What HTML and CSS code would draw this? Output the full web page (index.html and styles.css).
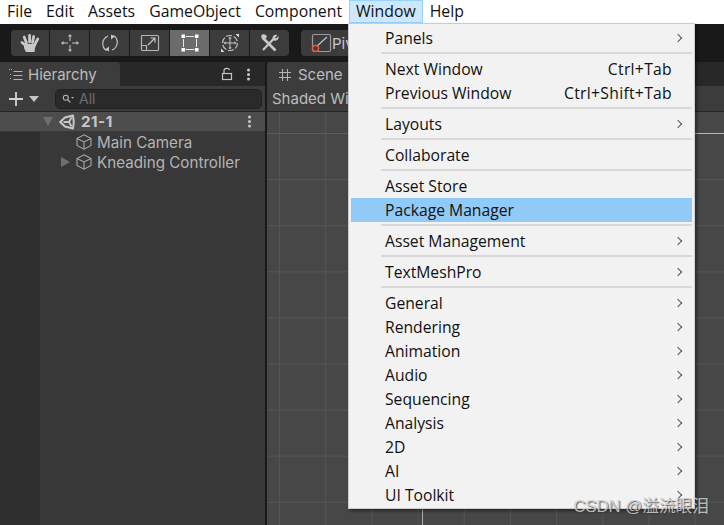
FILE: index.html
```html
<!DOCTYPE html>
<html lang="en">
<head>
    <meta charset="UTF-8">
    <title>Unity Editor - Window menu</title>
    <link rel="stylesheet" href="styles.css">
</head>
<body>
    <nav class="menubar">
        <span class="menubar-item">File</span>
        <span class="menubar-item">Edit</span>
        <span class="menubar-item">Assets</span>
        <span class="menubar-item">GameObject</span>
        <span class="menubar-item">Component</span>
        <span class="menubar-item active">Window</span>
        <span class="menubar-item">Help</span>
    </nav>

    <div class="toolbar">
        <div class="tool-group">
            <button class="tool">
                <svg width="20" height="20" viewBox="0 0 20 20"><g fill="none" stroke="#c8c8c8" stroke-width="2.800" stroke-linecap="round"><path d="M6.500 10 4.200 4M9.600 9V2.300M12.500 9.500l1.200-6M15 11l2.800-5M5.500 12.500 2 9.500"/></g><path d="M4 11h12.500l-1.500 4-.5 4H6L4 15Z" fill="#c8c8c8"/></svg>
            </button>
            <button class="tool">
                <svg width="20" height="20" viewBox="0 0 20 20" fill="none" stroke="#c4c4c4" stroke-width="1"><path d="M10 3v5M10 12v5M3 10h5M12 10h5"/><path d="M8 3.500h4L10 1ZM8 16.500h4L10 19ZM3.500 8v4L1 10ZM16.500 8v4L19 10Z" fill="#c4c4c4" stroke="none"/></svg>
            </button>
            <button class="tool">
                <svg width="20" height="20" viewBox="0 0 20 20" fill="none" stroke="#c4c4c4" stroke-width="1.200"><path d="M6.500 17.500C1 14 1.500 6 8 3"/><path d="M13.500 2.500C19 6 18.500 14 12 17"/><path d="M9 18.500v-5l-4 3ZM11 1.500v5l4-3Z" fill="#c4c4c4" stroke="none"/></svg>
            </button>
            <button class="tool">
                <svg width="20" height="20" viewBox="0 0 20 20" fill="none" stroke="#b4b4b4" stroke-width="1.200"><rect x="1.500" y="2.500" width="17" height="15" rx="1"/><path d="M1.500 12.500h5v5"/><path d="M8 12l7-7M10.500 5H15v4.500" stroke="#c8c8c8"/></svg>
            </button>
            <button class="tool selected">
                <svg width="20" height="20" viewBox="0 0 20 20" fill="#fff"><path d="M3.500 6v8M16.500 6v8M6 3.500h8M6 16.500h8" stroke="#e6e6e6" stroke-width="1"/><rect x="1.500" y="1.500" width="3.600" height="3.600" rx=".5"/><rect x="14.900" y="1.500" width="3.600" height="3.600" rx=".5"/><rect x="1.500" y="14.900" width="3.600" height="3.600" rx=".5"/><rect x="14.900" y="14.900" width="3.600" height="3.600" rx=".5"/></svg>
            </button>
            <button class="tool">
                <svg width="20" height="20" viewBox="0 0 20 20" fill="none" stroke="#c4c4c4"><circle cx="10" cy="10" r="7.500" stroke-width="1.200" stroke-dasharray="6 1.800"/><path d="M10 5v10M5 10h10"/><path d="M8.300 5.500h3.400L10 3.500ZM8.300 14.500h3.400L10 16.500ZM5.500 8.300v3.400L3.500 10ZM14.500 8.300v3.400l2-1.700Z" fill="#c4c4c4" stroke="none"/><path d="M19 1v3.500L15.500 1ZM1 19v-3.500L4.500 19Z" fill="#e0e0e0" stroke="none"/></svg>
            </button>
            <button class="tool">
                <svg width="20" height="20" viewBox="0 0 20 20" fill="none"><path d="M3 5 15.500 17.500" stroke="#c8c8c8" stroke-width="2.600"/><path d="M2 6 1 3l2-2 3 1 1 2-3 3Z" fill="#c8c8c8"/><path d="M3 17 14 5.500" stroke="#c8c8c8" stroke-width="2.200"/><path d="M12.500 6c-.5-3 2-5 5-4l-2.500 2.500 1 1L18.500 3c.8 3-1.500 5.500-4.500 4.500Z" fill="#c8c8c8"/></svg>
            </button>
        </div>
        <button class="pivot">
            <svg width="23" height="26" viewBox="0 0 23 26" fill="none"><rect x="3.500" y="4.500" width="18" height="17" rx="1.500" stroke="#9a9a9a" stroke-width="1.200"/><path d="M7 17 18 7" stroke="#c4c4c4" stroke-width="1.200"/><circle cx="6.500" cy="18.500" r="3" stroke="#e8583a" stroke-width="1.500" fill="#3c3c3c"/></svg>
            <span>Piv</span>
        </button>
    </div>

    <main class="workspace">
        <section class="hierarchy">
            <div class="tabstrip">
                <div class="tab tab-hierarchy">
                    <svg width="14" height="12" viewBox="0 0 14 12" fill="none" stroke="#b4b4b4"><path d="M4.500 2.500h9M4.500 6.500h9M4.500 10.500h9"/><path d="M0 .5h3M1 5.500h2M1 9.500h2" stroke-dasharray="1 1"/></svg>
                    <span>Hierarchy</span>
                </div>
                <div class="tab-actions">
                    <svg width="12" height="14" viewBox="0 0 12 14" fill="none" stroke="#c4c4c4" stroke-width="1.200"><rect x="1.500" y="6.500" width="9" height="6"/><path d="M3 6.500V3.500C3 .8 8 .8 8.500 3"/></svg>
                    <span class="kebab"></span>
                </div>
            </div>
            <div class="hierarchy-tools">
                <svg class="plus" width="16" height="16" viewBox="0 0 16 16"><path d="M8 1v14M1 8h14" stroke="#d2d2d2" stroke-width="1.800"/></svg>
                <span class="caret-down"></span>
                <div class="search">
                    <svg width="12" height="10" viewBox="0 0 12 10" fill="none" stroke="#b4b4b4" stroke-width="1.100"><circle cx="3.800" cy="3.800" r="2.500"/><path d="m5.800 5.800 2.600 2.700"/><path d="M9 3h3l-1.500 1.800Z" fill="#b4b4b4" stroke="none"/></svg>
                    <span>All</span>
                </div>
            </div>
            <div class="tree">
                <div class="scene-row">
                    <span class="caret-open"></span>
                    <svg class="unity-logo" width="16" height="16" viewBox="0 0 16 16" fill="none" stroke="#c8c8c8"><path d="M1.200 8 6 3.500 14 1.500 14.800 8 14 14.500 6 12.500Z" stroke-width="2" stroke-linejoin="round"/><path d="M4.500 8H10L12.500 3.500M10 8l2.500 4.500" stroke-width="1.800"/></svg>
                    <strong>21-1</strong>
                    <span class="kebab"></span>
                </div>
                <div class="tree-row">
                    <span class="caret-slot"></span>
                    <svg width="16" height="16" viewBox="0 0 16 16" fill="none" stroke="#a8a8a8" stroke-width="1.100"><path d="M8 .8 15 4.500v7L8 15.200 1 11.500v-7Z"/><path d="M1 4.500 8 8l7-3.500M8 8v7.200"/></svg>
                    <span>Main Camera</span>
                </div>
                <div class="tree-row">
                    <span class="caret-slot"><span class="caret-closed"></span></span>
                    <svg width="16" height="16" viewBox="0 0 16 16" fill="none" stroke="#a8a8a8" stroke-width="1.100"><path d="M8 .8 15 4.500v7L8 15.200 1 11.500v-7Z"/><path d="M1 4.500 8 8l7-3.500M8 8v7.200"/></svg>
                    <span>Kneading Controller</span>
                </div>
            </div>
        </section>

        <section class="scene">
            <div class="tabstrip">
                <div class="tab tab-scene">
                    <svg width="12" height="12" viewBox="0 0 12 12" fill="none" stroke="#b4b4b4"><path d="M3.500 0v12M8.500 0v12M0 3.500h12M0 8.500h12"/></svg>
                    <span>Scene</span>
                </div>
            </div>
            <div class="scene-tools"><span class="shading-mode">Shaded Wi</span></div>
            <div class="scene-grid"></div>
        </section>
    </main>

    <div class="dropdown">
        <div class="item"><span>Panels</span><i class="arrow"></i></div>
        <hr>
        <div class="item"><span>Next Window</span><em>Ctrl+Tab</em></div>
        <div class="item"><span>Previous Window</span><em>Ctrl+Shift+Tab</em></div>
        <hr>
        <div class="item"><span>Layouts</span><i class="arrow"></i></div>
        <hr>
        <div class="item"><span>Collaborate</span></div>
        <hr>
        <div class="item"><span>Asset Store</span></div>
        <div class="item hover"><span>Package Manager</span></div>
        <hr>
        <div class="item"><span>Asset Management</span><i class="arrow"></i></div>
        <hr>
        <div class="item"><span>TextMeshPro</span><i class="arrow"></i></div>
        <hr>
        <div class="item"><span>General</span><i class="arrow"></i></div>
        <div class="item"><span>Rendering</span><i class="arrow"></i></div>
        <div class="item"><span>Animation</span><i class="arrow"></i></div>
        <div class="item"><span>Audio</span><i class="arrow"></i></div>
        <div class="item"><span>Sequencing</span><i class="arrow"></i></div>
        <div class="item"><span>Analysis</span><i class="arrow"></i></div>
        <div class="item"><span>2D</span><i class="arrow"></i></div>
        <div class="item"><span>AI</span><i class="arrow"></i></div>
        <div class="item"><span>UI Toolkit</span><i class="arrow"></i></div>
    </div>

    <div class="watermark">CSDN @溢流眼泪</div>
</body>
</html>
```

FILE: styles.css
```css
* {
    box-sizing: border-box;
}

html, body {
    margin: 0;
    height: 100%;
    overflow: hidden;
}

body {
    position: relative;
    width: 724px;
    height: 525px;
    background-color: #191919;
    font-family: "Open Sans", "Noto Sans", sans-serif;
    display: flex;
    flex-direction: column;
}

svg {
    display: block;
    flex: none;
}

/* top menu */
.menubar {
    display: flex;
    height: 24px;
    background-color: #fff;
    font-size: 15.800px;
    line-height: 23px;
    color: #111;
}

.menubar-item {
    padding: 0 7px;
    height: 23px;
}

.menubar-item.active {
    background-color: #cce8ff;
    outline: 1px solid #99d1ff;
    outline-offset: -1px;
}

/* tool buttons */
.toolbar {
    display: flex;
    gap: 12px;
    height: 38px;
    padding: 6px 0 6px 11px;
}

.tool-group {
    display: flex;
    gap: 1px;
}

.tool {
    display: flex;
    align-items: center;
    justify-content: center;
    width: 39px;
    height: 26px;
    padding: 0;
    border: none;
    background-color: #3c3c3c;
}

.tool:first-child {
    width: 38px;
    border-radius: 4px 0 0 4px;
}

.tool:last-child {
    border-radius: 0 4px 4px 0;
}

.tool.selected {
    background-color: #6b6b6b;
}

.pivot {
    display: flex;
    align-items: center;
    width: 90px;
    height: 26px;
    padding: 0 0 0 8px;
    border: none;
    border-radius: 4px 0 0 4px;
    background-color: #3c3c3c;
    color: #c8c8c8;
    font: 15px "Inter", sans-serif;
}

/* panels */
.workspace {
    display: flex;
    flex: 1;
    min-height: 0;
    gap: 2px;
}

.tabstrip {
    display: flex;
    height: 24px;
    background-color: #282828;
}

.tab {
    display: flex;
    align-items: center;
    padding-top: 1px;
    background-color: #3c3c3c;
    color: #bdbdbd;
    font: 15px/23px "Inter", sans-serif;
}

.hierarchy {
    display: flex;
    flex-direction: column;
    width: 265px;
}

.tab-hierarchy {
    gap: 5px;
    width: 120px;
    padding-left: 9px;
    border-top-right-radius: 4px;
}

.tab-actions {
    display: flex;
    align-items: center;
    gap: 14px;
    margin-left: auto;
    padding-right: 15px;
}

.kebab {
    width: 3px;
    height: 3px;
    border-radius: 50%;
    background-color: #c8c8c8;
    box-shadow: 0 -4.500px 0 #c8c8c8, 0 4.500px 0 #c8c8c8;
}

.hierarchy-tools {
    display: flex;
    align-items: center;
    height: 26px;
    padding-left: 8px;
    background-color: #3c3c3c;
    border-bottom: 1px solid #232323;
}

.caret-down {
    width: 0;
    height: 0;
    margin-left: 5px;
    border-left: 5px solid transparent;
    border-right: 5px solid transparent;
    border-top: 6px solid #c4c4c4;
}

.search {
    display: flex;
    align-items: center;
    gap: 5px;
    width: 207px;
    height: 20px;
    margin-left: 16px;
    padding-left: 6px;
    border: 1px solid #212121;
    border-radius: 5px;
    background-color: #2a2a2a;
    color: #6e6e6e;
    font: 14px "Inter", sans-serif;
}

.tree {
    flex: 1;
    background: linear-gradient(to right, #2f2f2f 40px, #383838 40px);
    color: #b4b4b4;
    font: 15.200px "Inter", sans-serif;
}

.scene-row {
    display: flex;
    align-items: center;
    height: 20px;
    padding-left: 43px;
    background-color: #4d4d4d;
    color: #c8c8c8;
    border-bottom: 1px solid #3a3a3a;
}

.scene-row strong {
    margin-left: 6px;
    font-weight: 700;
    letter-spacing: 0.500px;
}

.scene-row .kebab {
    margin-left: auto;
    margin-right: 14px;
}

.caret-open {
    width: 0;
    height: 0;
    margin-right: 6px;
    border-left: 5px solid transparent;
    border-right: 5px solid transparent;
    border-top: 9px solid #6f6f6f;
}

.tree-row {
    display: flex;
    align-items: center;
    gap: 5px;
    height: 20px;
    padding-left: 61px;
}

.caret-slot {
    display: flex;
    width: 10px;
}

.caret-closed {
    width: 0;
    height: 0;
    border-top: 5px solid transparent;
    border-bottom: 5px solid transparent;
    border-left: 9px solid #6f6f6f;
}

.scene {
    display: flex;
    flex-direction: column;
    flex: 1;
    min-width: 0;
}

.tab-scene {
    gap: 7px;
    width: 90px;
    padding-left: 12px;
    border-top-left-radius: 4px;
}

.scene-tools {
    height: 26px;
    padding-left: 5px;
    background-color: #3c3c3c;
    color: #bdbdbd;
    font: 15px/25px "Inter", sans-serif;
    border-bottom: 1px solid #232323;
    white-space: nowrap;
}

/* the two brighter lines are the scene axes, the rest repeat every 46px */
.scene-grid {
    flex: 1;
    background-color: #474747;
    background-image:
        linear-gradient(#b0b0b0, #b0b0b0),
        linear-gradient(to right, #5c5c5c 420px, #b8b8b8 421px),
        linear-gradient(to right, #555 1px, transparent 1px),
        linear-gradient(to bottom, #555 1px, transparent 1px);
    background-size: 1px 100%, 100% 1px, 46.200px 46.100px, 46.200px 46.100px;
    background-position: 155px 0, 0 21px, 12px 0, 0 21px;
    background-repeat: no-repeat, no-repeat, repeat, repeat;
}

/* Window dropdown */
.dropdown {
    position: absolute;
    left: 348px;
    top: 23px;
    width: 347px;
    height: 486px;
    padding: 2px;
    background-color: #f2f2f2;
    border: 1px solid #ccc;
    box-shadow: 2px 2px 3px rgba(0, 0, 0, 0.45);
    color: #111;
    font-size: 15.700px;
}

.item {
    display: flex;
    align-items: center;
    justify-content: space-between;
    height: 24px;
    padding: 0 20px 0 34px;
}

.item.hover {
    background-color: #91c9f7;
}

.item em {
    font-style: normal;
    letter-spacing: 0.300px;
}

.arrow {
    width: 6px;
    height: 6px;
    margin-right: -9px;
    border-top: 1px solid #555;
    border-right: 1px solid #555;
    transform: rotate(45deg);
}

.dropdown hr {
    height: 2px;
    margin: 2px 0 3px 30px;
    border: none;
    background-color: #d8d8d8;
}

.watermark {
    position: absolute;
    right: 15px;
    bottom: 8px;
    color: #cfcfcf;
    font-size: 16.700px;
    font-family: "Liberation Sans", "Noto Sans CJK SC", sans-serif;
    text-shadow: 1px 1px 1px #3a3a3a;
    opacity: 0.85;
}
```
